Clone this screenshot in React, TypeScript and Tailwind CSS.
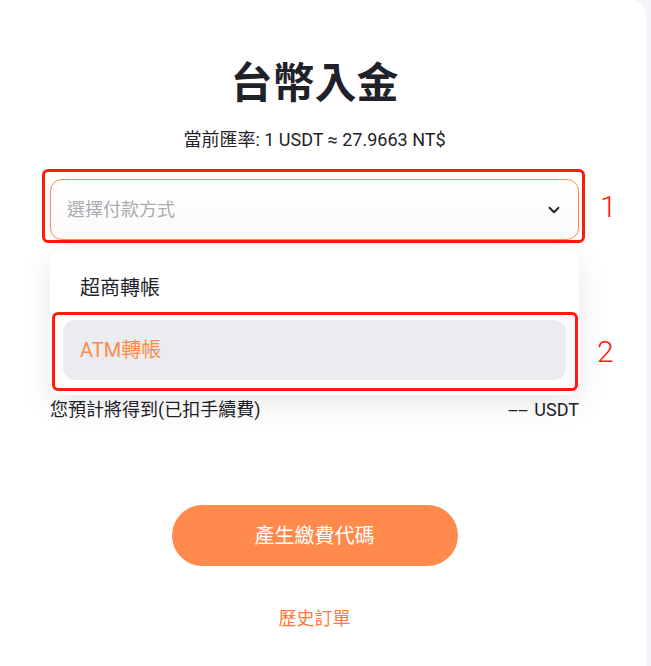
import React from 'react';
import { ChevronDown } from 'lucide-react';

const font = { fontFamily: 'Roboto, "Noto Sans CJK TC", "Noto Sans", sans-serif' };

const options = ['超商轉帳', 'ATM轉帳'];

const App = () => {
  const selected = 1;

  return (
    <div className="min-h-[666px] w-[651px] bg-[#f4f5f8]" style={font}>
      <div className="relative h-[666px] w-[646px] rounded-tr-2xl bg-white pl-[50px] pt-[59px]">
        <div className="w-[529px]">
          <h1 className="text-center text-[42px] font-bold leading-[50px] text-[#1f2329]">台幣入金</h1>
          <p className="mt-[19px] text-center text-[18px] leading-6 text-[#1f2329]">
            當前匯率: 1 USDT ≈ 27.9663 NT$
          </p>

          {/* select + open menu */}
          <div className="relative mt-[27px]">
            <button className="flex h-[61px] w-full items-center justify-between rounded-xl border border-[#ff8a4c] bg-gradient-to-b from-white to-[#fafafa] pl-4 pr-[15px] shadow-[0_4px_8px_rgba(0,0,0,0.05)]">
              <span className="text-[18px] text-[#a9abb0]">選擇付款方式</span>
              <ChevronDown size={18} strokeWidth={2.5} className="text-[#222]" />
            </button>
            <div className="pointer-events-none absolute -left-2 -top-[10px] h-[74px] w-[543px] rounded-md border-[3px] border-[#ff1a0a]" />
            <span className="absolute left-[550px] top-[8px] text-[30px] font-light leading-[40px] text-[#ff1a0a]">1</span>

            <div className="absolute left-0 top-[71px] z-10 w-full rounded-xl bg-white px-[13px] pb-[15px] pt-2 shadow-[0_8px_30px_rgba(0,0,0,0.1)]">
              <ul className="flex flex-col gap-[2px]">
                {options.map((o, i) => (
                  <li
                    key={o}
                    className={`flex h-[60px] items-center rounded-xl px-[17px] text-[20px] ${
                      i === selected ? 'bg-[#ebecf0] text-[#ff8a4c]' : 'text-[#1f2329]'
                    }`}
                  >
                    {o}
                  </li>
                ))}
              </ul>
              <div className="pointer-events-none absolute left-[2px] top-[62px] h-[79px] w-[526px] rounded-md border-[3px] border-[#ff1a0a]" />
              <span className="absolute left-[547px] top-[82px] text-[30px] font-light leading-[40px] text-[#ff1a0a]">2</span>
            </div>

            {/* amount input hidden under the open menu */}
            <div className="mt-[10px] h-[148px]">
              <div className="h-[61px] rounded-xl border border-[#e5e6eb]" />
            </div>
          </div>

          <div className="flex items-center justify-between text-[18px] leading-6 text-[#1f2329]">
            <span>您預計將得到(已扣手續費)</span>
            <span>
              <span className="mr-[2px] inline-block origin-right scale-x-[2]">--</span> USDT
            </span>
          </div>

          <div className="mt-[83px] flex justify-center">
            <button className="h-[61px] w-[286px] rounded-full bg-[#ff8a4c] text-[20px] text-white">產生繳費代碼</button>
          </div>

          <p className="mt-[41px] text-center text-[18px] leading-6 text-[#ff7a3c]">歷史訂單</p>
        </div>
      </div>
    </div>
  );
};

export default App;
